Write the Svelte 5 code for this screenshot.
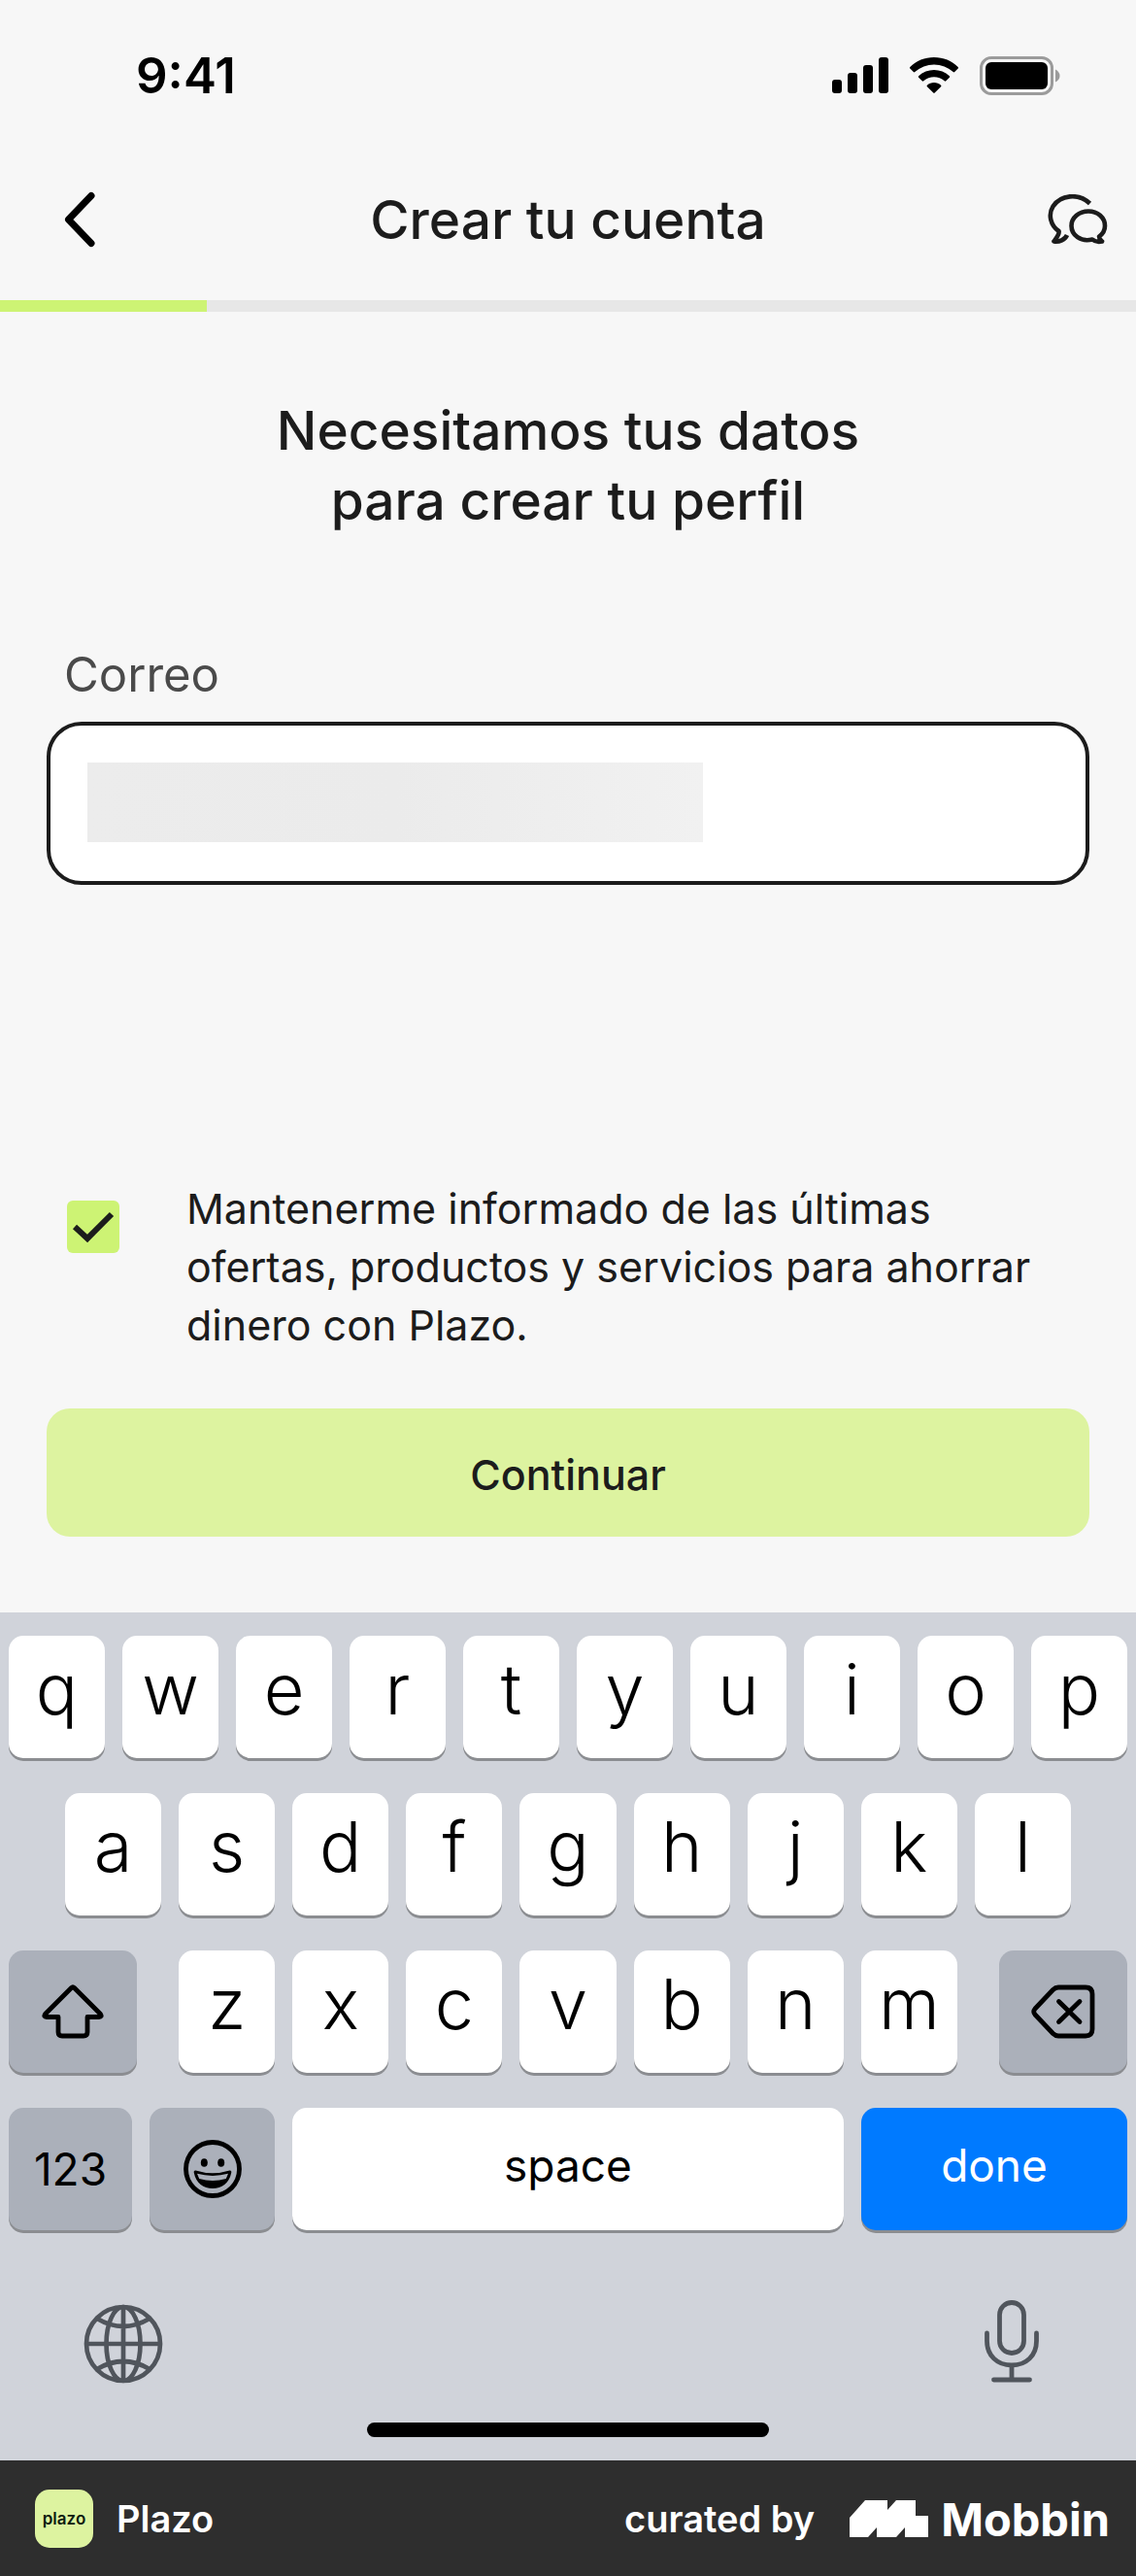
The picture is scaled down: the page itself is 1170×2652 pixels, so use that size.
<script lang="ts">
  type Key = { id: string; label?: string; aria?: string; kind: string };

  const letters = (row: string): Key[] =>
    [...row].map((c) => ({ id: c, label: c, kind: "letter" }));

  const rows = [
    { name: "top", keys: letters("qwertyuiop") },
    { name: "home", keys: letters("asdfghjkl") },
    {
      name: "bottom",
      keys: [
        { id: "shift", aria: "Shift", kind: "shift" },
        ...letters("zxcvbnm"),
        { id: "delete", aria: "Delete", kind: "delete" },
      ],
    },
    {
      name: "actions",
      keys: [
        { id: "123", label: "123", kind: "numbers" },
        { id: "emoji", aria: "Emoji", kind: "emoji" },
        { id: "space", label: "space", kind: "space" },
        { id: "done", label: "done", kind: "done" },
      ],
    },
  ];

  const progress = 18.2;

  let email = $state("");
  let subscribed = $state(true);
  let emailInput: HTMLInputElement;

  function press(key: Key) {
    if (key.kind === "letter") email += key.id;
    else if (key.kind === "space") email += " ";
    else if (key.kind === "delete") email = email.slice(0, -1);
    else if (key.kind === "done") emailInput.blur();
  }
</script>

<div class="screen">
  <div class="status">
    <span class="time">9:41</span>
    <div class="status-icons">
      <svg width="58" height="38" viewBox="0 0 58 38" aria-hidden="true">
        <rect x="0" y="23" width="10" height="14" rx="3" />
        <rect x="16" y="16" width="10" height="21" rx="3" />
        <rect x="32" y="8" width="10" height="29" rx="3" />
        <rect x="48" y="0" width="10" height="37" rx="3" />
      </svg>
      <svg width="52" height="38" viewBox="0 0 52 38" aria-hidden="true">
        <path d="M26 0C35.600 0 44.400 3.600 50.700 10Q51.500 10.800 50.700 11.600L47.200 15.100Q46.500 15.800 45.700 15.100A29 29 0 0 0 6.300 15.100Q5.500 15.800 4.800 15.100L1.300 11.600Q.5 10.800 1.300 10C7.600 3.600 16.400 0 26 0Z" />
        <path d="M26 13C31.800 13 37.500 15.200 41.900 19.200Q42.700 20 41.900 20.800L38.300 24.300Q37.500 25 36.700 24.300A16.500 16.500 0 0 0 15.300 24.300Q14.500 25 13.700 24.300L10.100 20.800Q9.300 20 10.100 19.200C14.500 15.200 20.200 13 26 13Z" />
        <path d="M26 26C28.700 26 31.200 27 33.100 28.700Q33.900 29.500 33.100 30.300L26.700 36.600Q26 37.300 25.300 36.600L18.900 30.300Q18.100 29.500 18.900 28.700C20.800 27 23.300 26 26 26Z" />
      </svg>
      <svg width="84" height="40" viewBox="0 0 84 40" aria-hidden="true">
        <rect x="1.500" y="1.500" width="73" height="37" rx="10.500" fill="none" stroke="#9b9b9b" stroke-width="3" />
        <rect x="6" y="6" width="64" height="28" rx="6" />
        <path d="M78 13.500Q82.500 16 82.500 20T78 26.500Z" fill="#9b9b9b" />
      </svg>
    </div>
  </div>

  <header class="nav">
    <button class="icon-button" aria-label="Volver">
      <svg width="36" height="60" viewBox="0 0 36 60" aria-hidden="true">
        <path d="M30 5.500L6.500 30L30 54.500" fill="none" stroke="#000" stroke-width="7" stroke-linecap="round" stroke-linejoin="round" />
      </svg>
    </button>
    <h1>Crear tu cuenta</h1>
    <button class="icon-button" aria-label="Chat de ayuda">
      <svg width="62" height="52" viewBox="0 0 62 52" fill="none" stroke="#1c1c1c" stroke-width="4.600" stroke-linejoin="round" aria-hidden="true">
        <path d="M43.500 9.500C31.500-2 13 1 5.500 12.500C.2 21 3 32 11.500 38C12.500 41 9.500 44.500 6.500 48.500C12 49.500 18 46.500 20 42" />
        <path d="M42 17.500C51.500 17.500 59 24 59 32.500C59 37 56.500 41 53 43.500C53 46 55 47.500 56 48.500C52 49.500 48.500 48.500 46 46.500C34 49.500 24.500 42 24.500 32.500C24.500 24 32.500 17.500 42 17.500Z" />
      </svg>
    </button>
  </header>

  <div class="progress" role="progressbar" aria-label="Progreso" aria-valuenow={progress} aria-valuemin="0" aria-valuemax="100">
    <div class="progress-fill" style="width: {progress}%"></div>
  </div>

  <main>
    <h2>Necesitamos tus datos<br />para crear tu perfil</h2>

    <label class="field-label" for="email">Correo</label>
    <div class="field">
      <input id="email" type="email" bind:value={email} bind:this={emailInput} />
      {#if !email}
        <span class="mask"></span>
      {/if}
    </div>

    <div class="consent">
      <input id="news" type="checkbox" bind:checked={subscribed} />
      <label for="news">
        Mantenerme informado de las últimas ofertas, productos y servicios para ahorrar dinero con Plazo.
      </label>
    </div>

    <button class="submit">Continuar</button>
  </main>

  <section class="keyboard" aria-label="Teclado">
    {#each rows as row (row.name)}
      <div class="row {row.name}">
        {#each row.keys as key (key.id)}
          <button class="key {key.kind}" aria-label={key.aria} onclick={() => press(key)}>
            {#if key.kind === "shift"}
              <svg width="66" height="56" viewBox="0 0 66 56" aria-hidden="true">
                <path d="M31.500 3.500Q33 2 34.500 3.500L61.500 30.500Q63.500 33.500 60 33.500H48V49Q48 53 44 53H22Q18 53 18 49V33.500H6Q2.500 33.500 4.500 30.500Z" fill="none" stroke="#000" stroke-width="4.800" stroke-linejoin="round" />
              </svg>
            {:else if key.kind === "delete"}
              <svg width="66" height="56" viewBox="0 0 66 56" fill="none" stroke="#000" stroke-width="4.800" stroke-linecap="round" stroke-linejoin="round" aria-hidden="true">
                <path d="M28 3H56Q63 3 63 10V46Q63 53 56 53H28Q25 53 22.500 50.500L4 31Q1.500 28 4 25L22.500 5.500Q25 3 28 3Z" />
                <path d="M28.500 17.500L50 38.500M50 17.500L28.500 38.500" />
              </svg>
            {:else if key.kind === "emoji"}
              <svg width="60" height="60" viewBox="0 0 60 60" aria-hidden="true">
                <circle cx="30" cy="30" r="27.500" fill="none" stroke="#000" stroke-width="4.800" />
                <ellipse cx="21.300" cy="23.500" rx="3.500" ry="4.300" />
                <ellipse cx="38.700" cy="23.500" rx="3.500" ry="4.300" />
                <path d="M12.500 31.500Q30 37 47.500 31.500Q49.800 31.300 49.200 34C47 44.500 39.500 50 30 50S13 44.500 10.800 34Q10.200 31.300 12.500 31.500Z" />
                <path d="M14 34.800Q30 39 46 34.800L43.800 40Q30 44 16.200 40Z" fill="#abb0ba" />
              </svg>
            {:else}
              {key.label}
            {/if}
          </button>
        {/each}
      </div>
    {/each}

    <div class="tools">
      <button class="icon-button" aria-label="Next keyboard">
        <svg width="82" height="82" viewBox="0 0 82 82" fill="none" stroke="#50555c" stroke-width="4.700" aria-hidden="true">
          <circle cx="41" cy="41" r="38" />
          <ellipse cx="41" cy="41" rx="17.500" ry="38" />
          <path d="M41 3V79M3 41H79M14 15Q41 31 68 15M14 67Q41 51 68 67" />
        </svg>
      </button>
      <button class="icon-button" aria-label="Dictate">
        <svg width="58" height="86" viewBox="0 0 58 86" fill="none" stroke="#50555c" stroke-width="4.800" stroke-linecap="round" aria-hidden="true">
          <rect x="16.500" y="2.500" width="25" height="52" rx="12.500" />
          <path d="M3.500 34V42C3.500 57 14 67 29 67S54.500 57 54.500 42V34M29 67V81M10.500 82H47.500" />
        </svg>
      </button>
    </div>
    <div class="home-indicator"></div>
  </section>

  <footer>
    <div class="app">
      <span class="app-icon">plazo</span>
      <span>Plazo</span>
    </div>
    <div class="credit">
      <span>curated by</span>
      <a href="#mobbin">
        <svg width="82" height="38" viewBox="0 0 82 38" aria-hidden="true">
          <path d="M0 18L16 0H39V10L48 0H68V16H81V38H57V28L48 38H28V28L19 38H0Z" fill="#fff" />
        </svg>
        Mobbin
      </a>
    </div>
  </footer>
</div>

<style>
  :global(body) {
    margin: 0;
    background: #f7f7f7;
  }
  .screen {
    display: flex;
    flex-direction: column;
    min-height: 100vh;
    background: #f7f7f7;
    color: #1c1c1c;
    font-family: Inter, "Liberation Sans", sans-serif;
  }
  button,
  input {
    font: inherit;
    color: inherit;
  }
  button {
    display: flex;
    align-items: center;
    justify-content: center;
    padding: 0;
    border: 0;
    cursor: pointer;
  }
  svg {
    display: block;
    flex: none;
  }
  .icon-button {
    background: none;
  }

  .status {
    display: flex;
    align-items: center;
    justify-content: space-between;
    padding: 48px 77px 0 140px;
    color: #000;
  }
  .time {
    font-size: 51px;
    font-weight: 600;
    line-height: 60px;
  }
  .status-icons {
    display: flex;
    align-items: center;
    gap: 21px;
  }

  .nav {
    display: grid;
    grid-template-columns: 1fr auto 1fr;
    align-items: center;
    padding: 82px 0 47px;
  }
  .nav .icon-button {
    justify-self: start;
    margin-left: 64px;
  }
  .nav .icon-button:last-child {
    justify-self: end;
    margin: 0 29px 0 0;
  }
  h1,
  h2 {
    margin: 0;
    font-size: 55px;
    font-weight: 500;
    line-height: 72px;
    text-align: center;
  }

  .progress {
    height: 12px;
    background: #e7e7e7;
  }
  .progress-fill {
    height: 100%;
    background: #cdf374;
  }

  main {
    display: flex;
    flex-direction: column;
    padding: 86px 48px 78px;
  }
  .field-label {
    margin: 112px 0 16px;
    padding-left: 18px;
    color: #4a4a4a;
    font-size: 49px;
    line-height: 64px;
  }
  .field {
    position: relative;
  }
  .field input {
    display: block;
    box-sizing: border-box;
    width: 100%;
    height: 168px;
    padding: 0 38px;
    border: 4px solid #1c1c1c;
    border-radius: 36px;
    outline: none;
    background: #fff;
    font-size: 48px;
  }
  .mask {
    position: absolute;
    top: 42px;
    left: 42px;
    width: 59%;
    height: 82px;
    background: linear-gradient(90deg, #ececec, #ebebeb 50%, #f1f1f1);
    pointer-events: none;
  }

  .consent {
    display: flex;
    align-items: flex-start;
    gap: 69px;
    margin: 303px 0 56px;
    padding: 0 40px 0 21px;
    font-size: 43px;
    line-height: 60px;
  }
  .consent input {
    flex: none;
    appearance: none;
    width: 54px;
    height: 54px;
    margin: 22px 0 0;
    border-radius: 6px;
    background: #e7e7e7;
  }
  .consent input:checked {
    background: #cdf374 url("data:image/svg+xml,%3Csvg xmlns='http://www.w3.org/2000/svg' viewBox='0 0 54 54'%3E%3Cpath d='M8 27L21 39L46 14' fill='none' stroke='%231c1c1c' stroke-width='6'/%3E%3C/svg%3E");
  }

  .submit {
    height: 132px;
    padding-top: 4px;
    border-radius: 24px;
    background: #ddf3a0;
    font-size: 43px;
    font-weight: 500;
  }

  .keyboard {
    display: flex;
    flex-direction: column;
    gap: 36px;
    flex: 1;
    padding: 24px 9px;
    background: #d0d3da;
    color: #000;
  }
  .row {
    display: grid;
    grid-template-columns: repeat(10, 1fr);
    gap: 18px;
  }
  .row.home {
    grid-template-columns: repeat(9, 1fr);
    padding: 0 58px;
  }
  .row.bottom {
    grid-template-columns: 157fr repeat(7, 99fr) 157fr;
  }
  .row.actions {
    grid-template-columns: 127fr 129fr 568fr 274fr;
  }
  .key {
    height: 126px;
    border-radius: 15px;
    background: #fff;
    box-shadow: 0 3px 0 #8b8d91;
    font-size: 46px;
  }
  .key.letter {
    padding-bottom: 18px;
    font-size: 72px;
    font-weight: 350;
  }
  .key.shift,
  .key.delete,
  .key.numbers,
  .key.emoji {
    background: #abb0ba;
  }
  .key.shift {
    margin-right: 25px;
  }
  .key.delete {
    margin-left: 25px;
  }
  .key.space,
  .key.done {
    padding-bottom: 8px;
  }
  .key.done {
    background: #007aff;
    color: #fff;
  }

  .tools {
    display: flex;
    align-items: flex-end;
    justify-content: space-between;
    padding: 36px 90px 0 77px;
  }
  .home-indicator {
    width: 36%;
    height: 15px;
    margin: 4px auto 0;
    border-radius: 8px;
    background: #000;
  }

  footer {
    display: flex;
    align-items: center;
    justify-content: space-between;
    height: 120px;
    padding: 0 27px 0 36px;
    background: #2e2e2e;
    color: #fff;
    font-size: 38px;
    font-weight: 600;
  }
  .app,
  .credit,
  .credit a {
    display: flex;
    align-items: center;
  }
  .app {
    gap: 24px;
  }
  .app-icon {
    display: grid;
    place-items: center;
    width: 60px;
    height: 60px;
    border-radius: 15px;
    background: #ddf3a0;
    color: #0c1c10;
    font-size: 17px;
  }
  .credit {
    gap: 36px;
  }
  .credit a {
    gap: 12px;
    color: inherit;
    font-size: 47px;
    font-weight: 700;
    text-decoration: none;
  }
</style>
